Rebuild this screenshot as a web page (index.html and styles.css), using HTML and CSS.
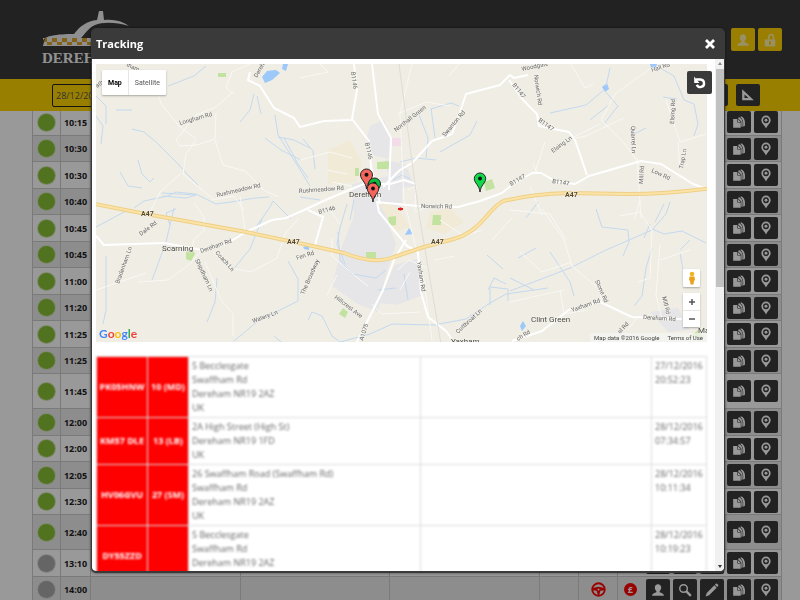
FILE: index.html
```html
<!DOCTYPE html>
<html lang="en">
<head>
<meta charset="utf-8">
<title>Tracking</title>
<link rel="stylesheet" href="styles.css">
</head>
<body>
<svg class="sprite" aria-hidden="true">
  <symbol id="i-user" viewBox="0 0 24 24"><path d="M12 2c-3.400 0-5.500 2.400-5.500 5.700 0 2.500 1 4.800 2.700 6v2C6 16.800 2 18 2 21v1h20v-1c0-3-4-4.200-7.200-5.300v-2c1.700-1.200 2.700-3.500 2.700-6C17.500 4.400 15.400 2 12 2z"/></symbol>
  <symbol id="i-lock" viewBox="0 0 24 24"><path d="M3 11h18v12H3z"/><path d="M10 11V6.500a4 4 0 0 1 8 0V11" fill="none" stroke="currentColor" stroke-width="2.500"/><path d="M12 14v6" stroke="#f6cd00" stroke-width="3"/></symbol>
  <symbol id="i-search" viewBox="0 0 24 24"><circle cx="9.500" cy="9.500" r="6.500" fill="none" stroke="currentColor" stroke-width="2.500"/><path d="M14 14l8 8" stroke="currentColor" stroke-width="4"/></symbol>
  <symbol id="i-pencil" viewBox="0 0 24 24"><path d="M1 23l2-6L16 4l4 4L7 21zM17 3l2-2q1-.5 2 .5l1.500 1.500q1 1 0 2L21 7z"/></symbol>
  <symbol id="i-copy" viewBox="0 0 24 24"><path d="M2 7h7v6h6v9H2z"/><path d="M10 7l5 5h-5z"/><path d="M10 5l3-1c5 4 6 8 5 16h-2v-9z"/><path d="M14 3l3-.5c5 4 6 9 5 16.500l-3 .5c1-7 0-12-5-16.500z"/></symbol>
  <symbol id="i-pin" viewBox="0 0 24 24"><path fill-rule="evenodd" d="M12 1a8 8 0 0 0-8 8c0 5 5 8 8 14 3-6 8-9 8-14a8 8 0 0 0-8-8zm0 3A5 5 0 1 1 12 14 5 5 0 0 1 12 4z"/><circle cx="12" cy="9" r="2.500"/></symbol>
  <symbol id="i-ruler" viewBox="0 0 24 24"><path fill-rule="evenodd" d="M2 2l20 19H2zM6 11v6h7z"/></symbol>
  <symbol id="i-wheel" viewBox="0 0 24 24"><circle cx="12" cy="12" r="10" fill="none" stroke="currentColor" stroke-width="3"/><path d="M3 10q9-5 18 0v3l-6 1-2 7h-2l-2-7-6-1z"/><circle cx="12" cy="12" r="1.500" fill="#eee"/></symbol>
  <symbol id="i-undo" viewBox="0 0 24 24"><path d="M5 6h8a6.500 6.500 0 1 1-6.500 9" fill="none" stroke="currentColor" stroke-width="4"/><path d="M2 1v11h9z"/></symbol>
  <symbol id="i-marker" viewBox="0 0 14 22"><path d="M7 21C6.500 14 1 11.500 1 7a6 6 0 0 1 12 0c0 4.500-5.500 7-6 14z" stroke="#222" stroke-width="1"/><circle cx="7" cy="6.800" r="2" fill="#111"/></symbol>
</svg>

<header class="top">
  <a class="logo" href="#" aria-label="Dereham Taxis">
    <svg class="logo-car" viewBox="0 0 90 40">
      <defs><pattern id="check" width="10" height="8" patternUnits="userSpaceOnUse" y="28"><rect width="10" height="8" fill="#eee"/><path d="M0 0h5v4H0zM5 4h5v4H5z" fill="#d9a62a"/></pattern></defs>
      <path d="M1 31C2 26 14 24 32 24 38 16 45 11 55 10l2-9h4l1 9c10-1 18 1 25 6-14-4-26-4-34-1-7 3-10 9-14 13H1z" fill="#eee"/>
      <path d="M3 28h60v8H1z" fill="url(#check)"/>
      <path d="M1 35.500h60" stroke="#eee"/>
    </svg>
    <span class="logo-name">DEREHAM</span>
  </a>
  <nav class="account">
    <button class="btn gold" aria-label="Account"><svg><use href="#i-user"/></svg></button>
    <button class="btn gold" aria-label="Log out"><svg><use href="#i-lock"/></svg></button>
  </nav>
</header>
<div class="filters">
  <input class="date" type="text" value="28/12/2016" aria-label="Date">
  <div class="filter-actions">
    <button class="btn" aria-label="Search"><svg><use href="#i-search"/></svg></button>
    <button class="btn" aria-label="Measure"><svg><use href="#i-ruler"/></svg></button>
  </div>
</div>
<main>
  <table class="jobs">
    <colgroup><col class="c-dot"><col class="c-time"><col><col><col><col class="c-note"><col class="c-note"><col class="c-pound"><col class="c-actions"></colgroup>
    <tbody id="jobs"></tbody>
  </table>
</main>

<div class="overlay">
  <section class="modal" role="dialog" aria-labelledby="title">
    <div class="modal-head">
      <h1 id="title">Tracking</h1>
      <button class="close" aria-label="Close"><svg viewBox="0 0 10 10"><path d="M1 1l8 8M9 1L1 9" stroke="#fff" stroke-width="2.800"/></svg></button>
    </div>
    <div class="modal-body">
      <div class="content">
        <div class="map">
          <svg class="map-art" viewBox="96 64 611 278" preserveAspectRatio="xMidYMid slice">
            <rect x="-500" y="0" width="2000" height="500" fill="#efede4"/>
            <g fill="#e6e6e8">
              <path d="M370 126l14-6 7 17-2 22-16-4-6-18zM352 184l36-8 14 6v20l-14 22 8 20-10 30-8 38-20-8-26-18 10-40 12-30zM385 160l20 4 10 22-24 4z"/>
              <path d="M395 265l22-6 6 36-26 10-20-2zM650 312l28-4 12 22-22 2z"/>
            </g>
            <path d="M328 150l22-10 12 22-6 20-28 2zM430 212l20-4 14 14-20 12-18-6zM378 202l18 4 14 20-14 6z" fill="#f1ead6"/>
            <g fill="#c2e3a0">
              <path d="M377 162l13-1v8h-13zM355 168h4v8h-4zM388 217l8-1v9l-7 1zM433 215h8v10h-9zM366 252h10v7h-10zM343 308l5 4-3 6-6-4zM484 182l8-3 3 9-9 3zM218 73h8v4h-8zM186 252l6-3 3 5-4 7-5-2zM690 337l8-7 6 8z"/>
            </g>
            <path d="M392 138h10v8h-10z" fill="#f1dce8"/>
            <path d="M262 77l5-6 9-1 4 3-8 7-7 3zM283 64h5l-2 7-4-2zM409 228l4 6-8 1zM602 87l5-4 2 6-4 3zM523 321l3 5-4 5-2-5zM650 64h7l-1 4h-5zM303 247l6-2v5l-5-1z" fill="#9cc8fa"/>
            <g class="water">
              <path d="M96 96l10 10 0 18M116 110h16M96 116l7 10-2 18M132 129l12 3 12 10 22 22 8 9 12 12M138 160l4 14 8 8 4-4M120 172l8 14 14 2M134 208l10-7 24-5 8-4 20 2 20 10 15-2 24-4 14-1M162 193l34 2-10 3-24-2M168 86l26-10 12-10M254 94l-4 16-10 12M257 96l4 18M275 115l3 20 16 25 16 26M278 137l16 3 16 8M284 138l14 26 10 14M265 138l16 12 20 10"/>
              <path d="M96 227l30-16M174 208l-8 34-14 38M176 209l-10 4 4 12M106 256v54l-3 14M262 219l-12 30-18 22M256 227l14-20 3-6 18 18M217 278l-2 24-8 20M288 261l10 18v22l-40 20-24 20M274 336l12 10M347 204l-7 24-3 16 8 20M354 200l-4 20M338 232l2 28 12 14 24 4 10-8M300 197l20 3M308 320l4-8 10 4 10 20 8 6 30-8 22-10 42 1 32-6 24-16 16-9 42-6"/>
              <path d="M418 112l10 26-2 20M431 108l4 30M431 109l20-6 8 3M440 152l30-17 7-14M303 139l10 12 2 18M393 180l9-5 8 4M400 162l16-4 20 2M550 113l36-8 18-15M604 90l14 16-14 18M610 68l-4 18M590 120l20-16M660 68l14 8 10 24 10 4 4 20-4 12M630 136l16-8M663 97l14 2M538 202l-12 16M664 204l-9 18M487 255l16 14M488 290l6-12 12 6M490 305v-18l18 2v12"/>
              <path d="M510 291l60-23 36-18 46-20 14-16 4-12M596 209l6 18 26 3 1 12-6 14M652 229l12 5 18-3 24 12M680 250l10-10M550 252l20 30 4 14M536 248l-18 10M652 248l-6 20-4 28-8 10M680 253l4 22 16 10M510 278l24 12M404 274l4 26M378 290l18-2M650 224l-6 14"/>
            </g>
            <g class="minor">
              <path d="M250 64l-18 8-6 16 8 6M234 91l-18 16-20 8-20 25 4 6 17-1 18-6 1-26M196 140l-10 14-3 20 30 25M180 174l-20 18-12 24M215 140l8 25 22 6 20 20 14 6M154 85l8 20 16 20 18 14M194 203l10 14 0 14-10 8-2 10M212 200l22-4 10 14M240 196l5 34M299 218l-14 16-8 24-26 14-20-4-18-16M200 252l-10 12-22 16-30 2M96 290l50-17M205 262l16 38 12 14 0 22M300 78l28-6-8-8M332 238v18l28 24 8 6M330 210l10 14M337 275l-10 20M397 270l12-10 18 8M400 290l10-18M372 304l10 10 38-2"/>
              <path d="M398 114l28-12 24 4M412 64l-12 50 4 86 20 80 8 60M408 190l8-4-1 24M415 212l10-4M440 220l24 16 18-6M459 64l-10 12M492 240l20-22M435 260l20-4M571 64l14 24 8-4M651 68l-36 26-14 26 24 24 14 20M600 124l-28 14M586 136l38-18M586 136l-10 2M545 142l-10 30M666 100l10 30 4 12 26-8M678 142l2 28M637 158l4 60M537 172l-4-8M510 210l40 4 16 26M530 187l12 28M572 262l-30 10-22-20M542 209l22 31 8 26 28 24 2 14M560 290l4 24 24-4M510 302l54-12M620 216l20-4 12 18-2 48-12 4M660 245l-4 50 6 24M640 200l-6 20M690 250l-30 10M628 330l10-14M300 160l30-8 22 6M327 170l20 4M332 182l20 4"/>
            </g>
            <g class="road">
              <path d="M250 72l-2 8 12 6 14 22 20 10 6 9 24-6 28-1M354 64l3 26-5 29 17 22 2 26 5 20M372 64l6 50 13 24-2 52M383 187l17-17 12-7 20-22 20-7 8-22 6-18 34-9 10-10 4 3 14-3M509 80l14 20 14 14 2 12 30 6 6 8 12 35"/>
              <path d="M96 236l8 9 60-2 38 7 24-6 20-12 26-12 14-2 18-8 26-12 24-10 10-4 26 0 14-4 12 4M308 210l15 7-8 28M376 202l42 4 40 1 22-6 22-8 10-8 20-12h9l16 9 18 2 14-8 52-15 20 3 32 20 14 5M377 202l2 10 28 34 11 6 3 40 7 25 18 14 6 8"/>
              <path d="M512 341l30-10 28-22 30-7 32 15 50 2M406 240l-12 20-11 30-15 30-12 24M376 186l4 18"/>
            </g>
            <path d="M399 64l20 150 22 130" fill="none" stroke="#dfdcd6" stroke-width="1"/>
            <path class="a47-edge" d="M90 203l56 11 100 18 62 13 36 8q30 12 50 4l30-10 30-8q18-5 32-22t22-17q26-6 60-7l60 1q40 0 85-6"/>
            <path class="a47" d="M90 203l56 11 100 18 62 13 36 8q30 12 50 4l30-10 30-8q18-5 32-22t22-17q26-6 60-7l60 1q40 0 85-6"/>
            <path d="M398 209h5M400.500 207.500v3" stroke="#d22" stroke-width="2"/>
            <g class="labels">
              <text transform="translate(180 125) rotate(-16)">Longham Rd</text>
              <text transform="translate(126 66) rotate(25)">tham</text>
              <text transform="translate(97 88) rotate(-35)">ath</text>
              <text transform="translate(257 78) rotate(-60)">Dereham</text>
              <text transform="translate(217 197) rotate(-13)">Rushmeadow Rd</text>
              <text transform="translate(299 193) rotate(-4)">Rushmeadow Rd</text>
              <text transform="translate(351 72) rotate(82)">B1146</text>
              <text transform="translate(365 143) rotate(78)">B1146</text>
              <text transform="translate(396 132) rotate(-38)">Northall Green</text>
              <text transform="translate(445 137) rotate(-50)">Swanton Rd</text>
              <text transform="translate(421 208) rotate(1)">Norwich Rd</text>
              <text transform="translate(319 214) rotate(-15)">B1146</text>
              <text transform="translate(512 85) rotate(52)">B1147</text>
              <text transform="translate(538 121) rotate(36)">B1147</text>
              <text transform="translate(511 186) rotate(-30)">B1147</text>
              <text transform="translate(552 183) rotate(8)">B1147</text>
              <text transform="translate(522 71) rotate(-12)">Woodgate</text>
              <text transform="translate(534 75) rotate(82)">Norwich Rd</text>
              <text transform="translate(553 153) rotate(-36)">Elsing Ln</text>
              <text transform="translate(631 126) rotate(88)">Quarrel Ln</text>
              <text transform="translate(652 72) rotate(-18)">Hall Rd</text>
              <text transform="translate(674 124) rotate(-87)">Elsing Rd</text>
              <text transform="translate(683 169) rotate(-80)">Trap Ln</text>
              <text transform="translate(643 184) rotate(-86)">Mill Rd</text>
              <text transform="translate(651 172) rotate(24)">Low Rd</text>
              <text transform="translate(141 236) rotate(-37)">Dale Rd</text>
              <text transform="translate(119 284) rotate(-70)">Bradenham Ln</text>
              <text transform="translate(201 253) rotate(-19)">Dereham Rd</text>
              <text transform="translate(215 253) rotate(48)">Coach Ln</text>
              <text transform="translate(195 260) rotate(65)">Shipdham Ln</text>
              <text transform="translate(297 260) rotate(-18)">Fen Rd</text>
              <text transform="translate(304 295) rotate(-66)">The Broadway</text>
              <text transform="translate(253 323) rotate(-20)">Watery Ln</text>
              <text transform="translate(334 298) rotate(37)">Hillcrest Ave</text>
              <text transform="translate(363 341) rotate(-72)">A1075</text>
              <text transform="translate(417 262) rotate(81)">Yaxham Rd</text>
              <text transform="translate(458 334) rotate(-43)">Cutthroat Ln</text>
              <text transform="translate(572 312) rotate(-19)">Yaxham Rd</text>
              <text transform="translate(643 319) rotate(4)">Dereham Rd</text>
              <text transform="translate(595 281) rotate(66)">Stone Rd</text>
              <text transform="translate(662 297) rotate(76)">Mill Rd</text>
              <text transform="translate(518 341) rotate(-32)">ch Rd</text>
              <text transform="translate(620 334) rotate(-48)">al Rd</text>
            </g>
            <g class="a-labels">
              <text x="141" y="216">A47</text><text x="287" y="244">A47</text><text x="431" y="244">A47</text><text x="565" y="197">A47</text>
            </g>
            <g class="places">
              <text x="349" y="197">Dereham</text>
              <text x="162" y="251">Scarning</text>
              <text x="531" y="322">Clint Green</text>
              <text x="451" y="344">Yaxham</text>
              <text x="698" y="333">Mattishall</text>
            </g>
            <use href="#i-marker" x="359" y="168" width="15" height="22" fill="#f4655c"/>
            <use href="#i-marker" x="367" y="177" width="15" height="22" fill="#10b83c"/>
            <use href="#i-marker" x="366" y="182" width="14" height="21" fill="#f4655c"/>
            <use href="#i-marker" x="473" y="172" width="14" height="21" fill="#10d848"/>
          </svg>
          <div class="map-types"><button class="on">Map</button><button>Satellite</button></div>
          <div class="google"><span class="b">G</span><span class="r">o</span><span class="y">o</span><span class="b">g</span><span class="g">l</span><span class="r">e</span></div>
          <div class="map-tools">
            <button class="tool" aria-label="Street view"><svg viewBox="0 0 10 14"><circle cx="5" cy="3" r="2.300" fill="#f2b327"/><path d="M2.500 5.500h5l.5 4H7l-.5 4h-3l-.5-4H2z" fill="#e9a21c"/></svg></button>
            <div class="zoom">
              <button class="tool" aria-label="Zoom in"><svg viewBox="0 0 10 14"><path d="M2 7h6M5 4v6" stroke="#555" stroke-width="1.500"/></svg></button>
              <button class="tool" aria-label="Zoom out"><svg viewBox="0 0 10 14"><path d="M2 7h6" stroke="#555" stroke-width="1.500"/></svg></button>
            </div>
          </div>
          <div class="credits"><span>Map data ©2016 Google</span><a href="#">Terms of Use</a></div>
          <button class="btn reset" aria-label="Reset map"><svg><use href="#i-undo"/></svg></button>
        </div>
        <table class="log">
          <colgroup><col class="l-reg"><col class="l-driver"><col><col><col class="l-when"></colgroup>
          <tbody>
            <tr><th>PK05HNW</th><th>10 (MD)</th><td>5 Becclesgate<br>Swaffham Rd<br>Dereham NR19 2AZ<br>UK</td><td></td><td>27/12/2016<br>20:52:23</td></tr>
            <tr><th>KM57 DLE</th><th>13 (LB)</th><td>2A High Street (High St)<br>Dereham NR19 1FD<br>UK</td><td></td><td>28/12/2016<br>07:34:57</td></tr>
            <tr><th>HV06GVU</th><th>27 (SM)</th><td>26 Swaffham Road (Swaffham Rd)<br>Swaffham Rd<br>Dereham NR19 2AZ<br>UK</td><td></td><td>28/12/2016<br>10:11:34</td></tr>
            <tr><th>DY55ZZD</th><th></th><td>5 Becclesgate<br>Swaffham Rd<br>Dereham NR19 2AZ<br>UK</td><td></td><td>28/12/2016<br>10:19:23</td></tr>
          </tbody>
        </table>
      </div>
      <div class="scrollbar" aria-hidden="true"><span class="up"></span><span class="thumb"></span><span class="down"></span></div>
    </div>
  </section>
</div>
<script src="script.js"></script>
</body>
</html>
```
FILE: styles.css
```css
* { box-sizing: border-box; }
html, body { height: 100%; }
body { margin: 0; background: #fff; color: #222; font-family: "Open Sans", sans-serif; font-size: 9px; overflow: hidden; }
button { padding: 0; border: 0; font: inherit; cursor: pointer; }
.sprite { position: absolute; width: 0; height: 0; }

.top { display: flex; justify-content: space-between; align-items: flex-start; height: 79px; padding: 10px 18px 0 42px; background: #3a3a3a; }
.logo { display: flex; flex-direction: column; text-decoration: none; }
.logo-car { width: 90px; height: 40px; }
.logo-name { color: #f4f4f4; font: 700 15px/16px "Liberation Serif", serif; }
.account { display: flex; gap: 3px; padding-top: 18px; }
.btn { display: flex; align-items: center; justify-content: center; width: 24px; height: 22px; border-radius: 2px; background: #3a3a3a; color: #fff; }
.btn svg { width: 14px; height: 14px; fill: currentColor; }
.btn.gold { height: 23px; background: #ffd200; color: #fff2a8; }

.filters { position: relative; display: flex; justify-content: space-between; align-items: center; height: 32px; padding: 0 40px 0 52px; background: #ffd400; }
.date { width: 90px; height: 23px; padding: 0 3px; border: 1px solid #222; border-radius: 2px; background: transparent; color: #555; font: inherit; font-size: 9px; }
.filter-actions { display: flex; gap: 8px; }

main { margin: -3px 18px 0 32px; }
.jobs { width: 100%; table-layout: fixed; border-collapse: collapse; }
.jobs td { height: 27px; padding: 0 3px; border: 1px solid #ccc; vertical-align: middle; text-align: center; }
.jobs tr { background: #fff; }
.jobs tr.short td { height: 26px; }
.jobs tr.tall td { height: 35px; }
.jobs tr:nth-child(even) { background: #ebebeb; }
.jobs .time { padding: 0; font-weight: 700; }
.jobs .fee { padding: 0; border-right: 0; }
.jobs .tools { border-left: 0; }
.c-dot { width: 28px; }
.c-time { width: 30px; }
.c-note { width: 39px; }
.c-pound { width: 25px; }
.c-actions { width: 139px; }
.dot { display: block; width: 17px; height: 17px; margin: 0 auto; border-radius: 50%; background: #87c034; box-shadow: 0 0 0 1px #d3e6b6; }
.dot.idle { background: #a8a8a8; box-shadow: 0 0 0 1px #ddd; }
.badge { display: block; width: 15px; height: 15px; margin: 0 auto; color: #f00; fill: #f00; }
.pound { display: block; width: 13px; height: 13px; margin: 0 auto; border-radius: 50%; background: #f00; color: #fff; font-size: 9px; line-height: 13px; font-weight: 700; }
.actions { display: flex; justify-content: flex-end; gap: 3px; }

.overlay { position: fixed; inset: 0; padding: 28px 75px 27px 91px; background: rgba(0, 0, 0, .4); }
.modal { display: flex; flex-direction: column; height: 100%; border: 1px solid #3a3a3a; border-bottom-width: 2px; border-radius: 5px; background: #3a3a3a; overflow: hidden; box-shadow: 0 0 3px rgba(0, 0, 0, .6); }
.modal-head { display: flex; flex: none; justify-content: space-between; align-items: center; height: 30px; padding: 0 9px 0 4px; }
.modal-head h1 { margin: 0; color: #fff; font-size: 11px; line-height: 16px; }
.close { width: 10px; height: 10px; background: none; }
.close svg { display: block; width: 10px; height: 10px; }
.modal-body { display: flex; flex: 1; min-height: 0; background: #fff; border-radius: 0 0 4px 4px; overflow: hidden; }
.content { flex: 1; min-width: 0; padding: 5px 8px 0 4px; overflow: hidden; }
.scrollbar { display: flex; flex-direction: column; align-items: center; width: 9px; padding: 3px 0; background: #f1f1f1; }
.scrollbar .up { border: 2px solid transparent; border-bottom: 3px solid #888; border-top: 0; }
.scrollbar .thumb { width: 8px; height: 43%; margin-top: 4px; background: #c1c1c1; }
.scrollbar .down { margin-top: auto; border: 2px solid transparent; border-top: 3px solid #333; border-bottom: 0; }

.map { position: relative; height: 278px; }
.map-art { display: block; width: 100%; height: 100%; }
.water { fill: none; stroke: #c4d9ef; stroke-width: 1; }
.minor { fill: none; stroke: #f9f8f4; stroke-width: 1; }
.road { fill: none; stroke: #fff; stroke-width: 2; stroke-linejoin: round; }
.a47-edge { fill: none; stroke: #efcf86; stroke-width: 4; }
.a47 { fill: none; stroke: #fbe3a6; stroke-width: 2; }
.labels { fill: #666; font: 6px Roboto, sans-serif; }
.a-labels { fill: #5a4a2a; font: 700 7px Roboto, sans-serif; }
.places { fill: #4a4a44; font: 8px Roboto, sans-serif; }
.labels, .places, .a-labels { paint-order: stroke; stroke: #f5f3ec; stroke-width: 1px; }
.map-types { position: absolute; top: 6px; left: 6px; display: flex; height: 25px; border-radius: 1px; background: #fff; box-shadow: 0 1px 2px rgba(0, 0, 0, .3); }
.map-types button { padding: 0 6px; background: none; color: #555; font: 7px Roboto, sans-serif; }
.map-types .on { border-right: 1px solid #e6e6e6; color: #000; font-weight: 700; }
.google { position: absolute; left: 3px; bottom: 0; font: 700 12px/17px Lato, sans-serif; text-shadow: 0 0 1px #fff; }
.google .b { color: #4285f4; }
.google .r { color: #ea4335; }
.google .y { color: #fbbc05; }
.google .g { color: #34a853; }
.map-tools { position: absolute; right: 7px; bottom: 15px; display: flex; flex-direction: column; gap: 6px; }
.tool { display: block; width: 17px; height: 17px; background: #fff; }
.tool svg { display: block; width: 12px; height: 14px; margin: 0 auto; }
.map-tools > .tool, .zoom { border-radius: 1px; box-shadow: 0 1px 2px rgba(0, 0, 0, .3); }
.map-tools > .tool { height: 18px; }
.zoom .tool + .tool { border-top: 1px solid #e6e6e6; }
.credits { position: absolute; right: 0; bottom: 0; display: flex; gap: 8px; padding: 0 4px; background: rgba(245, 245, 245, .7); color: #444; font: 6px/9px Roboto, sans-serif; }
.credits a { color: #444; text-decoration: none; }
.reset { position: absolute; top: 7px; right: -5px; width: 25px; height: 23px; }

.log { width: 100%; margin-top: 14px; table-layout: fixed; border-collapse: collapse; color: #666; filter: blur(1px); }
.log th, .log td { padding: 2px 3px; border: 1px solid #ddd; line-height: 14px; text-align: left; vertical-align: top; }
.log th { padding: 2px 0; background: #f00; color: #fff; text-align: center; vertical-align: middle; }
.l-reg { width: 51px; }
.l-driver { width: 41px; }
.l-when { width: 55px; }
```
FILE: script.js
```js
const times = ["10:15", "10:30", "10:30", "10:40", "10:45", "10:45", "11:00", "11:20", "11:25", "11:25",
  "11:45", "12:00", "12:00", "12:05", "12:30", "12:40", "13:10", "14:00"];
const tall = ["11:45", "12:40"];
const actions = [["user", "Customer"], ["search", "View"], ["pencil", "Edit"], ["copy", "Copy"], ["pin", "Track"]];
const buttons = actions.map(([icon, label]) =>
  `<button class="btn" aria-label="${label}"><svg><use href="#i-${icon}"/></svg></button>`).join("");

let shortNext = false;
document.getElementById("jobs").innerHTML = times.map((time) => {
  let size = "tall";
  if (!tall.includes(time)) {
    size = shortNext ? "short" : "";
    shortNext = !shortNext;
  }
  const idle = time >= "13:00" ? " idle" : "";
  return `<tr class="${size}">
    <td><span class="dot${idle}"></span></td><td class="time">${time}</td><td></td><td></td><td></td><td></td>
    <td><svg class="badge" viewBox="0 0 15 15"><use href="#i-wheel"/></svg></td><td class="fee"><span class="pound">£</span></td>
    <td class="tools"><div class="actions">${buttons}</div></td></tr>`;
}).join("");
```
